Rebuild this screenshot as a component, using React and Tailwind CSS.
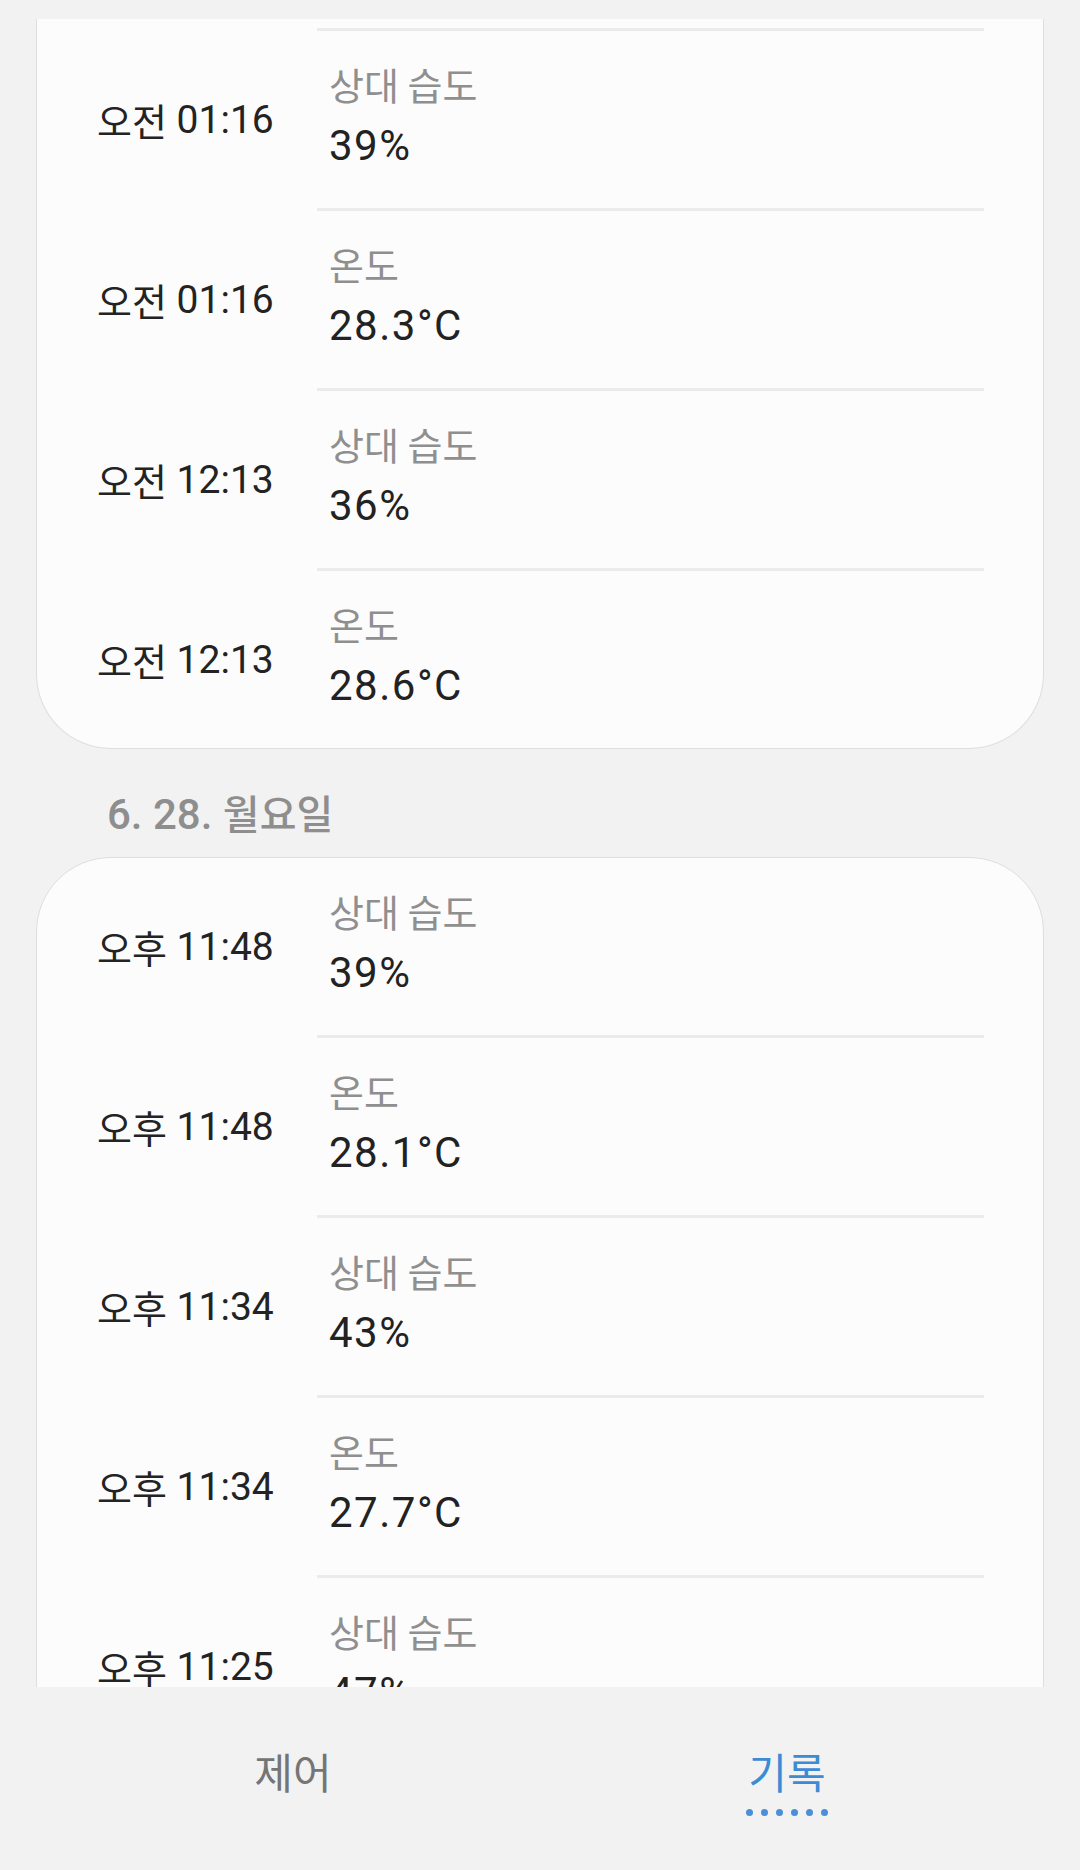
import React from "react";

const FONT = { fontFamily: "Roboto, 'Noto Sans CJK KR', sans-serif" };

function Row({ ampm, time, label, value, divider = true }) {
  return (
    <div className="flex">
      <div className="w-[280px] shrink-0 flex flex-col">
        {divider && <div className="h-[3px]" />}
        <div className="h-[177px] flex items-center pl-[60px] text-[#232323] leading-[56px]">
          <span className="text-[38px]" style={{ fontFamily: "'Noto Sans CJK KR', sans-serif" }}>{ampm}</span>
          <span className="text-[39px]" style={{ fontFamily: "Roboto, sans-serif" }}>&nbsp;{time}</span>
        </div>
      </div>
      <div className="flex-1 mr-[59px] flex flex-col">
        {divider && <div className="h-[3px] bg-[#ebebeb]" />}
        <div className="h-[177px] pl-[12px] pt-[25px] flex flex-col">
          <div className="text-[38px] leading-[56px] text-[#8f8f8f]" style={{ fontFamily: "'Noto Sans CJK KR', sans-serif" }}>{label}</div>
          <div className="mt-[3px] text-[42px] leading-[62px] tracking-[1.5px] text-[#222222]" style={{ fontFamily: "Roboto, sans-serif" }}>{value}</div>
        </div>
      </div>
    </div>
  );
}

export default function App() {
  const card1 = [
    ["오전", "01:16", "상대 습도", "39%"],
    ["오전", "01:16", "온도", "28.3°C"],
    ["오전", "12:13", "상대 습도", "36%"],
    ["오전", "12:13", "온도", "28.6°C"],
  ];
  const card2 = [
    ["오후", "11:48", "상대 습도", "39%"],
    ["오후", "11:48", "온도", "28.1°C"],
    ["오후", "11:34", "상대 습도", "43%"],
    ["오후", "11:34", "온도", "27.7°C"],
    ["오후", "11:25", "상대 습도", "47%"],
    ["오후", "11:25", "온도", "27.5°C"],
  ];
  return (
    <div className="w-[1080px] h-[1870px] bg-[#f2f2f2] flex flex-col overflow-hidden" style={FONT}>
      <div className="h-[19px] shrink-0" />
      <div className="h-[1668px] shrink-0 overflow-hidden px-[36px]">
        <div className="bg-[#fcfcfc] border border-t-0 border-[#dedede] rounded-b-[75px]">
          <div className="h-[9px]" />
          {card1.map((r, i) => (
            <Row key={i} ampm={r[0]} time={r[1]} label={r[2]} value={r[3]} divider />
          ))}
        </div>
        <div className="h-[108px] pt-[35px] pl-[71px]">
          <div className="leading-[56px] text-[#8e8e8e] font-medium">
            <span className="text-[42px]" style={{ fontFamily: "Roboto, sans-serif" }}>6. 28.&nbsp;</span>
            <span className="text-[40px]" style={{ fontFamily: "'Noto Sans CJK KR', sans-serif" }}>월요일</span>
          </div>
        </div>
        <div className="bg-[#fcfcfc] border border-[#dedede] rounded-[75px]">
          {card2.map((r, i) => (
            <Row key={i} ampm={r[0]} time={r[1]} label={r[2]} value={r[3]} divider={i !== 0} />
          ))}
        </div>
      </div>
      <div className="flex-1 flex px-[46px] pt-[58px]" style={{ fontFamily: "'Noto Sans CJK KR', sans-serif" }}>
        <div className="flex-1 flex flex-col items-center">
          <div className="text-[42px] leading-[52px] text-[#757575]">제어</div>
        </div>
        <div className="flex-1 flex flex-col items-center">
          <div className="text-[42px] leading-[52px] text-[#3d8bd4]">기록</div>
          <div className="mt-[12px] flex gap-[8px]">
            {[0, 1, 2, 3, 4, 5].map((d) => (
              <div key={d} className="w-[7px] h-[7px] rounded-full bg-[#4a90d9]" />
            ))}
          </div>
        </div>
      </div>
    </div>
  );
}
